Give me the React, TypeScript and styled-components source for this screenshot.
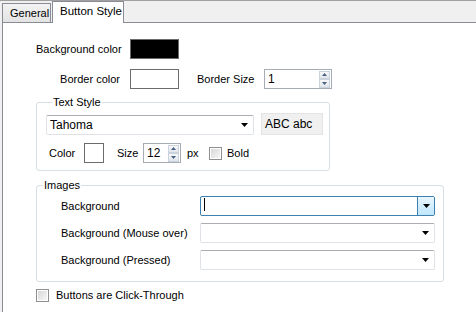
import React from 'react';
import styled, { createGlobalStyle } from 'styled-components';

const GlobalStyle = createGlobalStyle`
    * { box-sizing: border-box; }
    html, body { margin: 0; padding: 0; }
    body {
        font-family: "Liberation Sans", Arial, sans-serif;
        font-size: 11px;
        line-height: 13px;
        color: #000;
        background: #f0f0f0;
    }
    #root { height: 312px; overflow: hidden; }
`;

const Window = styled.div`
    display: flex;
    flex-direction: column;
    height: 312px;
    background: #f0f0f0;
`;

const TabBar = styled.div`
    display: flex;
    align-items: flex-end;
    height: 22px;
    padding-left: 2px;
    border-top: 1px solid #a0a0a0;
`;

const Tab = styled.div<{ $active?: boolean }>`
    position: relative;
    z-index: ${(p) => (p.$active ? 2 : 1)};
    display: flex;
    align-items: center;
    height: ${(p) => (p.$active ? '22px' : '19px')};
    margin-bottom: ${(p) => (p.$active ? '-1px' : '0')};
    margin-right: 1px;
    padding: ${(p) => (p.$active ? '0 0 3px 7px' : '0 0 0 7px')};
    width: ${(p) => (p.$active ? '72px' : '49px')};
    border: 1px solid #898c95;
    border-bottom: none;
    background: ${(p) => (p.$active ? '#fff' : 'linear-gradient(#f2f2f2, #e3e3e3)')};
    font-size: ${(p) => (p.$active ? '11.5px' : '11px')};
    white-space: nowrap;
`;

const Panel = styled.div`
    flex: 1;
    margin-left: 2px;
    padding: 16px 0 0 33px;
    border-top: 1px solid #898c95;
    border-left: 1px solid #898c95;
    background: #fff;
`;

const ColorRow = styled.div<{ $top?: number }>`
    display: flex;
    align-items: center;
    height: 20px;
    margin-top: ${(p) => p.$top ?? 0}px;
`;

const RowLabel = styled.span<{ $width: number; $right?: boolean; $ml?: number }>`
    width: ${(p) => p.$width}px;
    flex: none;
    margin-left: ${(p) => p.$ml ?? 0}px;
    text-align: ${(p) => (p.$right ? 'right' : 'left')};
    white-space: nowrap;
`;

const Swatch = styled.div<{ $color: string; $w: number; $ml?: number; $mr?: number }>`
    width: ${(p) => p.$w}px;
    height: 20px;
    flex: none;
    margin-left: ${(p) => p.$ml ?? 0}px;
    margin-right: ${(p) => p.$mr ?? 0}px;
    background: ${(p) => p.$color};
    border: 1px solid #6b6b6b;
`;

const SpinBox = styled.div<{ $w: number }>`
    display: flex;
    align-items: center;
    width: ${(p) => p.$w}px;
    height: 20px;
    flex: none;
    padding: 0 1px 0 3px;
    border: 1px solid #a5acb5;
    background: #fff;
`;

const SpinValue = styled.span`
    flex: 1;
    font-size: 12px;
`;

const SpinButtons = styled.div`
    display: flex;
    flex-direction: column;
    width: 11px;
    height: 17px;
`;

const SpinButton = styled.div`
    display: flex;
    align-items: center;
    justify-content: center;
    height: 8.5px;
    border: 1px solid #c9d3de;
    background: linear-gradient(#f8f8f8, #e1e5ea);
`;

const Group = styled.fieldset<{ $w: number; $top: number; $pad: string }>`
    width: ${(p) => p.$w}px;
    margin: ${(p) => p.$top}px 0 0 0;
    padding: ${(p) => p.$pad};
    border: 1px solid #d5dfe5;
    border-radius: 3px;
    min-width: 0;
`;

const Legend = styled.legend`
    margin-left: 6px;
    padding: 0 1px;
    line-height: 13px;
`;

const FontRow = styled.div`
    display: flex;
    align-items: flex-end;
    gap: 7px;
`;

const Combo = styled.div<{ $w: number; $focused?: boolean }>`
    display: flex;
    align-items: center;
    width: ${(p) => p.$w}px;
    height: 20px;
    flex: none;
    padding-left: 3px;
    border: 1px solid ${(p) => (p.$focused ? '#3c7fb1' : '#dfe3e8')};
    border-top-color: ${(p) => (p.$focused ? '#3c7fb1' : '#abadb3')};
    border-radius: 2px;
    background: #fff;
    font-size: 12px;
`;

const ComboText = styled.span`
    flex: 1;
`;

const Caret = styled.span`
    display: inline-block;
    width: 1px;
    height: 13px;
    background: #000;
`;

const ComboButton = styled.div<{ $focused?: boolean }>`
    display: flex;
    align-items: center;
    justify-content: center;
    width: 17px;
    height: 18px;
    margin-right: ${(p) => (p.$focused ? '0' : '1px')};
    border-left: 1px solid ${(p) => (p.$focused ? '#3c7fb1' : 'transparent')};
    background: ${(p) => (p.$focused ? 'linear-gradient(#eaf6fd, #bee6fd)' : 'transparent')};
`;

const Preview = styled.div`
    display: flex;
    align-items: center;
    width: 62px;
    height: 22px;
    padding-left: 3px;
    background: #f0f0f0;
    border: 1px solid #e3e3e3;
    font-size: 12px;
`;

const StyleRow = styled.div`
    display: flex;
    align-items: center;
    height: 20px;
    margin-top: 8px;
    padding-left: 3px;
`;

const Check = styled.div`
    width: 13px;
    height: 13px;
    flex: none;
    border: 1px solid #8f8f8f;
    background: #fff;
    padding: 1px;
    &::after {
        content: '';
        display: block;
        width: 100%;
        height: 100%;
        background: linear-gradient(135deg, #d8d8d8, #f6f6f6);
    }
`;

const CheckText = styled.span<{ $ml: number }>`
    margin-left: ${(p) => p.$ml}px;
`;

const ImageRow = styled.div<{ $top?: number }>`
    display: flex;
    align-items: center;
    padding-left: 24px;
    margin-top: ${(p) => p.$top ?? 0}px;
`;

const ThroughRow = styled.div`
    display: flex;
    align-items: center;
    margin-top: 7px;
`;

const Arrow = () => (
    <svg width="7" height="4" viewBox="0 0 7 4">
        <path d="M0 0h7L3.5 4z" fill="#000" />
    </svg>
);

const SpinArrow = ({ up }: { up?: boolean }) => (
    <svg width="5" height="3" viewBox="0 0 5 3">
        <path d={up ? 'M0 3h5L2.5 0z' : 'M0 0h5L2.5 3z'} fill="#4a6186" />
    </svg>
);

const Spinner: React.FC<{ value: string; width: number }> = ({ value, width }) => (
    <SpinBox $w={width}>
        <SpinValue>{value}</SpinValue>
        <SpinButtons>
            <SpinButton><SpinArrow up /></SpinButton>
            <SpinButton><SpinArrow /></SpinButton>
        </SpinButtons>
    </SpinBox>
);

const ComboBox: React.FC<{ text?: string; width: number; focused?: boolean }> = ({ text, width, focused }) => (
    <Combo $w={width} $focused={focused}>
        <ComboText>{focused ? <Caret /> : text}</ComboText>
        <ComboButton $focused={focused}><Arrow /></ComboButton>
    </Combo>
);

const imageRows = ['Background', 'Background (Mouse over)', 'Background (Pressed)'];

const App = () => (
    <Window>
        <GlobalStyle />
        <TabBar>
            <Tab>General</Tab>
            <Tab $active>Button Style</Tab>
        </TabBar>
        <Panel>
            <ColorRow>
                <RowLabel $width={84} $right>Background color</RowLabel>
                <Swatch $color="#000" $w={49} $ml={10} />
            </ColorRow>
            <ColorRow $top={10}>
                <RowLabel $width={84} $right>Border color</RowLabel>
                <Swatch $color="#fff" $w={49} $ml={10} $mr={18} />
                <RowLabel $width={67}>Border Size</RowLabel>
                <Spinner value="1" width={68} />
            </ColorRow>

            <Group $w={294} $top={7} $pad="4px 5px 7px 9px">
                <Legend>Text Style</Legend>
                <FontRow>
                    <ComboBox text="Tahoma" width={208} />
                    <Preview>ABC abc</Preview>
                </FontRow>
                <StyleRow>
                    <RowLabel $width={35}>Color</RowLabel>
                    <Swatch $color="#fff" $w={20} $mr={13} />
                    <RowLabel $width={26}>Size</RowLabel>
                    <Spinner value="12" width={38} />
                    <RowLabel $width={22} $ml={6}>px</RowLabel>
                    <Check />
                    <CheckText $ml={5}>Bold</CheckText>
                </StyleRow>
            </Group>

            <Group $w={408} $top={8} $pad="4px 9px 11px 0">
                <Legend>Images</Legend>
                {imageRows.map((label, i) => (
                    <ImageRow key={label} $top={i === 0 ? 0 : 7}>
                        <RowLabel $width={139}>{label}</RowLabel>
                        <ComboBox width={235} focused={i === 0} />
                    </ImageRow>
                ))}
            </Group>

            <ThroughRow>
                <Check />
                <CheckText $ml={7}>Buttons are Click-Through</CheckText>
            </ThroughRow>
        </Panel>
    </Window>
);

export default App;
